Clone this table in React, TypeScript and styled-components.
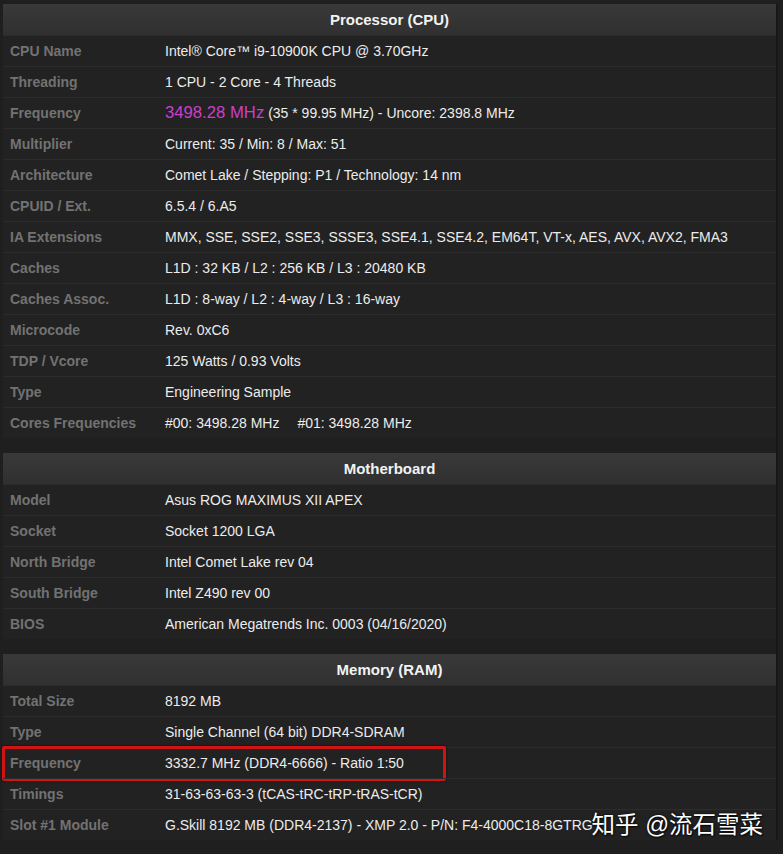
import styled, { createGlobalStyle, css } from 'styled-components';

const GlobalStyle = createGlobalStyle`
  html, body {
    margin: 0;
    padding: 0;
    background: #1f1f1f;
  }
  body {
    font-family: "Liberation Sans", Arial, sans-serif;
  }
`;

const Page = styled.div`
  position: relative;
  width: 783px;
  height: 854px;
  padding: 4px 0 0 3px;
  box-sizing: border-box;
  background: #1f1f1f;
  overflow: hidden;
`;

const Panel = styled.div`
  width: 773px;
  display: flex;
  flex-direction: column;
  gap: 15px;
  border-right: 2px solid #181818;
`;

const Block = styled.div`
  display: flex;
  flex-direction: column;
  background: #222222;
`;

const Header = styled.div`
  height: 31px;
  display: flex;
  align-items: center;
  justify-content: center;
  background: linear-gradient(#393939, #303030);
  color: #f2f2f2;
  font-size: 15px;
  font-weight: bold;
`;

const Line = styled.div<{ $highlight?: boolean }>`
  position: relative;
  height: 31px;
  display: flex;
  align-items: center;
  box-sizing: border-box;
  border-top: 1px solid #2c2c2c;

  ${({ $highlight }) =>
    $highlight &&
    css`
      &::after {
        content: '';
        position: absolute;
        left: -1px;
        top: -2px;
        width: 444px;
        bottom: -3px;
        border: 3px solid #d01414;
        border-radius: 2px;
        box-sizing: border-box;
        box-shadow: 0 0 3px rgba(0, 0, 0, 0.6);
      }
    `}
`;

const Label = styled.div`
  width: 162px;
  padding-left: 7px;
  box-sizing: border-box;
  flex-shrink: 0;
  color: #727272;
  font-size: 14px;
  font-weight: bold;
`;

const Value = styled.div`
  color: #ececec;
  font-size: 14px;
  white-space: nowrap;
`;

const Accent = styled.span`
  color: #cc3fcc;
  font-size: 16.7px;
`;

const CoreFreq = styled.span`
  margin-right: 18px;
`;

const Watermark = styled.div`
  position: absolute;
  right: 20px;
  top: 806px;
  color: #ffffff;
  font-family: "Liberation Sans", "Noto Sans CJK SC", sans-serif;
  font-size: 23.5px;
  text-shadow: 0 0 2px rgba(0, 0, 0, 0.9), 1px 1px 2px rgba(0, 0, 0, 0.8);
`;

type Row = { label: string; value: React.ReactNode; highlight?: boolean };

const cpuRows: Row[] = [
  { label: 'CPU Name', value: 'Intel® Core™ i9-10900K CPU @ 3.70GHz' },
  { label: 'Threading', value: '1 CPU - 2 Core - 4 Threads' },
  {
    label: 'Frequency',
    value: (
      <>
        <Accent>3498.28 MHz</Accent> (35 * 99.95 MHz) - Uncore: 2398.8 MHz
      </>
    ),
  },
  { label: 'Multiplier', value: 'Current: 35 / Min: 8 / Max: 51' },
  { label: 'Architecture', value: 'Comet Lake / Stepping: P1 / Technology: 14 nm' },
  { label: 'CPUID / Ext.', value: '6.5.4 / 6.A5' },
  { label: 'IA Extensions', value: 'MMX, SSE, SSE2, SSE3, SSSE3, SSE4.1, SSE4.2, EM64T, VT-x, AES, AVX, AVX2, FMA3' },
  { label: 'Caches', value: 'L1D : 32 KB / L2 : 256 KB / L3 : 20480 KB' },
  { label: 'Caches Assoc.', value: 'L1D : 8-way / L2 : 4-way / L3 : 16-way' },
  { label: 'Microcode', value: 'Rev. 0xC6' },
  { label: 'TDP / Vcore', value: '125 Watts / 0.93 Volts' },
  { label: 'Type', value: 'Engineering Sample' },
  {
    label: 'Cores Frequencies',
    value: (
      <>
        <CoreFreq>#00: 3498.28 MHz</CoreFreq>
        <span>#01: 3498.28 MHz</span>
      </>
    ),
  },
];

const boardRows: Row[] = [
  { label: 'Model', value: 'Asus ROG MAXIMUS XII APEX' },
  { label: 'Socket', value: 'Socket 1200 LGA' },
  { label: 'North Bridge', value: 'Intel Comet Lake rev 04' },
  { label: 'South Bridge', value: 'Intel Z490 rev 00' },
  { label: 'BIOS', value: 'American Megatrends Inc. 0003 (04/16/2020)' },
];

const memoryRows: Row[] = [
  { label: 'Total Size', value: '8192 MB' },
  { label: 'Type', value: 'Single Channel (64 bit) DDR4-SDRAM' },
  { label: 'Frequency', value: '3332.7 MHz (DDR4-6666) - Ratio 1:50', highlight: true },
  { label: 'Timings', value: '31-63-63-63-3 (tCAS-tRC-tRP-tRAS-tCR)' },
  { label: 'Slot #1 Module', value: 'G.Skill 8192 MB (DDR4-2137) - XMP 2.0 - P/N: F4-4000C18-8GTRG' },
];

const Section = ({ title, rows }: { title: string; rows: Row[] }) => (
  <Block>
    <Header>{title}</Header>
    {rows.map((r) => (
      <Line key={r.label} $highlight={r.highlight}>
        <Label>{r.label}</Label>
        <Value>{r.value}</Value>
      </Line>
    ))}
  </Block>
);

const App = () => {
  return (
    <Page>
      <GlobalStyle />
      <Panel>
        <Section title="Processor (CPU)" rows={cpuRows} />
        <Section title="Motherboard" rows={boardRows} />
        <Section title="Memory (RAM)" rows={memoryRows} />
      </Panel>
      <Watermark>知乎 @流石雪菜</Watermark>
    </Page>
  );
};

export default App;
